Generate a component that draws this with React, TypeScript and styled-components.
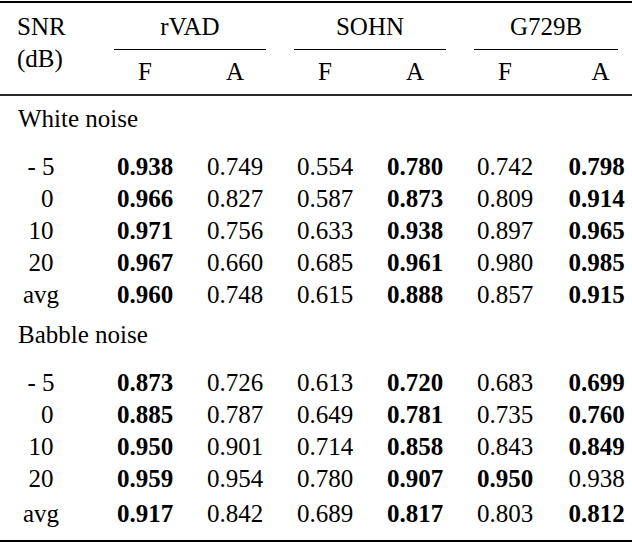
import React from "react";
import styled, { createGlobalStyle } from "styled-components";

const GlobalStyle = createGlobalStyle`
    html, body {
        margin: 0;
        padding: 0;
        background: #ffffff;
    }
`;

const Table = styled.div`
    width: 632px;
    padding-top: 1px;
    font-family: "Liberation Serif", "Times New Roman", Times, "DejaVu Serif", serif;
    color: #000000;
    font-size: 25px;
    line-height: 32px;
`;

const Rule = styled.div<{ $thick?: number; $tone?: string }>`
    height: ${(p) => p.$thick ?? 2}px;
    background: ${(p) => p.$tone ?? "#000"};
`;

const Header = styled.div`
    display: flex;
    padding: 7.6px 0 6.4px;
`;

const SnrHead = styled.div`
    width: 100px;
    padding-left: 17px;
    box-sizing: border-box;
`;

const Group = styled.div<{ $w: number }>`
    width: ${(p) => p.$w}px;
    display: flex;
    flex-direction: column;
`;

const GroupTitle = styled.div`
    text-align: center;
`;

const GroupRule = styled.div`
    margin: 6.4px 14px 5.6px;
    border-top: 1px solid #000;
`;

const SubRow = styled.div`
    display: flex;
`;

const Cell = styled.div<{ $bold?: boolean; $shift?: number }>`
    width: 90px;
    flex: 0 0 auto;
    text-align: center;
    font-weight: ${(p) => (p.$bold ? 700 : 400)};
    padding-left: ${(p) => p.$shift ?? 0}px;
    box-sizing: border-box;
`;

const Section = styled.div<{ $top?: number }>`
    margin-top: ${(p) => p.$top ?? 0}px;
`;

const SectionLabel = styled.div`
    padding-left: 18px;
    margin-bottom: 16px;
`;

const Row = styled.div<{ $top?: number }>`
    display: grid;
    grid-template-columns: 100px repeat(5, 90px) 1fr;
    margin-top: ${(p) => p.$top ?? 0}px;
`;

const SnrCell = styled.div`
    padding-right: 18px;
    text-align: center;
`;

const Value = styled.div<{ $bold?: boolean; $shift?: number }>`
    text-align: center;
    font-weight: ${(p) => (p.$bold ? 700 : 400)};
    padding-left: ${(p) => p.$shift ?? 0}px;
`;

type Entry = { snr: string; vals: string[]; bold: number[] };

const white: Entry[] = [
    { snr: "- 5", vals: ["0.938", "0.749", "0.554", "0.780", "0.742", "0.798"], bold: [0, 3, 5] },
    { snr: "\u20070", vals: ["0.966", "0.827", "0.587", "0.873", "0.809", "0.914"], bold: [0, 3, 5] },
    { snr: "10", vals: ["0.971", "0.756", "0.633", "0.938", "0.897", "0.965"], bold: [0, 3, 5] },
    { snr: "20", vals: ["0.967", "0.660", "0.685", "0.961", "0.980", "0.985"], bold: [0, 3, 5] },
    { snr: "avg", vals: ["0.960", "0.748", "0.615", "0.888", "0.857", "0.915"], bold: [0, 3, 5] },
];

const babble: Entry[] = [
    { snr: "- 5", vals: ["0.873", "0.726", "0.613", "0.720", "0.683", "0.699"], bold: [0, 3, 5] },
    { snr: "\u20070", vals: ["0.885", "0.787", "0.649", "0.781", "0.735", "0.760"], bold: [0, 3, 5] },
    { snr: "10", vals: ["0.950", "0.901", "0.714", "0.858", "0.843", "0.849"], bold: [0, 3, 5] },
    { snr: "20", vals: ["0.959", "0.954", "0.780", "0.907", "0.950", "0.938"], bold: [0, 3, 4] },
    { snr: "avg", vals: ["0.917", "0.842", "0.689", "0.817", "0.803", "0.812"], bold: [0, 3, 5] },
];

const DataRow: React.FC<{ e: Entry; top?: number }> = ({ e, top }) => (
    <Row $top={top}>
        <SnrCell>{e.snr}</SnrCell>
        {e.vals.map((v, i) => (
            <Value key={i} $bold={e.bold.includes(i)} $shift={i === 5 ? 11 : 0}>
                {v}
            </Value>
        ))}
    </Row>
);

const App: React.FC = () => {
    return (
        <>
            <GlobalStyle />
            <Table>
                <Rule />
                <Header>
                    <SnrHead>
                        SNR
                        <br />
                        (dB)
                    </SnrHead>
                    <Group $w={180}>
                        <GroupTitle>rVAD</GroupTitle>
                        <GroupRule />
                        <SubRow>
                            <Cell>F</Cell>
                            <Cell>A</Cell>
                        </SubRow>
                    </Group>
                    <Group $w={180}>
                        <GroupTitle>SOHN</GroupTitle>
                        <GroupRule />
                        <SubRow>
                            <Cell>F</Cell>
                            <Cell>A</Cell>
                        </SubRow>
                    </Group>
                    <Group $w={172}>
                        <GroupTitle>G729B</GroupTitle>
                        <GroupRule />
                        <SubRow>
                            <Cell>F</Cell>
                            <Cell $shift={11}>A</Cell>
                        </SubRow>
                    </Group>
                </Header>
                <Rule $tone="#2a2a2a" />
                <Section $top={6.6}>
                    <SectionLabel>White noise</SectionLabel>
                    {white.map((e) => (
                        <DataRow key={e.snr} e={e} />
                    ))}
                </Section>
                <Section $top={8}>
                    <SectionLabel>Babble noise</SectionLabel>
                    {babble.map((e, i) => (
                        <DataRow key={e.snr} e={e} top={i === 4 ? 3 : 0} />
                    ))}
                </Section>
                <Section $top={10.4}>
                    <Rule />
                </Section>
            </Table>
        </>
    );
};

export default App;
